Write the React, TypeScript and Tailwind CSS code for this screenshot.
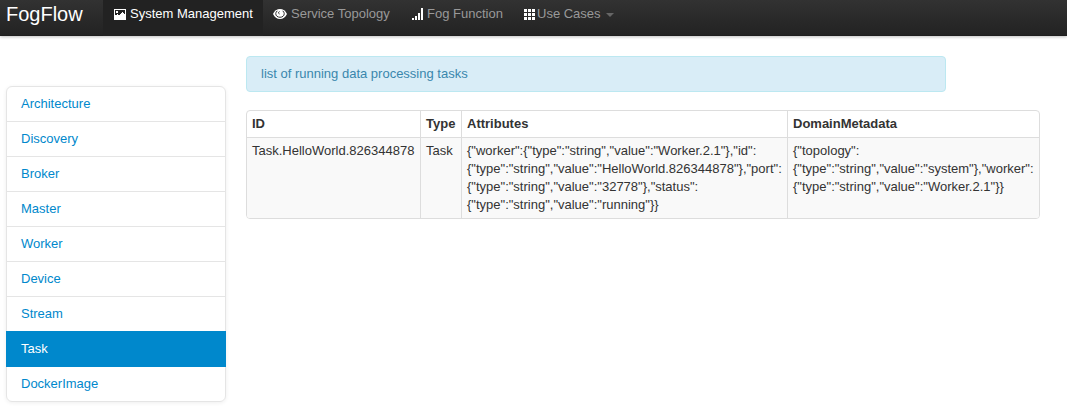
import React from "react";

const sections = [
  "Architecture",
  "Discovery",
  "Broker",
  "Master",
  "Worker",
  "Device",
  "Stream",
  "Task",
  "DockerImage",
];

function PictureIcon() {
  return (
    <svg width="12" height="11" viewBox="0 0 12 11" className="block shrink-0" fill="#fff" shapeRendering="crispEdges">
      <path fillRule="evenodd" d="M0 0H12V11H0ZM1 1V6H3V5H4V6H6V5H7V4H8V3H9V4H10V5H11V1ZM2 2H4V4H2Z" />
    </svg>
  );
}

function EyeIcon() {
  return (
    <svg width="14" height="10" viewBox="0 0 14 10" className="block shrink-0">
      <path fill="#fff" d="M0 5C1.6 1.8 4 0 7 0s5.400 1.800 7 5c-1.600 3.200-4 5-7 5S1.600 8.200 0 5Z" />
      <path fill="none" stroke="#2b2b2b" strokeWidth="1" d="M4.300 1.800C2.300 3.400 2.300 6 4 7.300c1.800 1.300 4.300 1.300 6 0 1.700-1.300 1.700-3.900-.3-5.500" />
      <path fill="none" stroke="#2b2b2b" strokeWidth="1" d="M6.500 2.500C5.300 3 5.200 4.500 6.500 5" />
    </svg>
  );
}

function SignalIcon() {
  return (
    <svg width="12" height="12" viewBox="0 0 12 12" className="block shrink-0" fill="#fff" shapeRendering="crispEdges">
      <path d="M0 10h2v2H0zM3 8h2v4H3zM6 5h2v7H6zM9 0h2v12H9z" />
    </svg>
  );
}

function GridIcon() {
  return (
    <svg width="11" height="11" viewBox="0 0 11 11" className="block shrink-0" fill="#fff" shapeRendering="crispEdges">
      <path d="M0 0h3v3H0zM4 0h3v3H4zM8 0h3v3H8zM0 4h3v3H0zM4 4h3v3H4zM8 4h3v3H8zM0 8h3v3H0zM4 8h3v3H4zM8 8h3v3H8z" />
    </svg>
  );
}

function Navbar() {
  return (
    <nav className="flex h-9 items-start bg-linear-to-b from-[#323232] to-[#222222] text-[#999999] shadow-[0_1px_3px_rgba(0,0,0,0.25),inset_0_-1px_0_rgba(0,0,0,0.1)]">
      <a href="#" className="w-[103px] pt-1 pl-1.5 text-[20px] leading-5 text-white">
        FogFlow
      </a>
      <a href="#" className="flex h-9 w-40 items-start gap-1 bg-[#222222] pt-[5px] pl-[11px] text-white">
        <span className="pt-1"><PictureIcon /></span>
        System Management
      </a>
      <a href="#" className="flex w-[138px] pt-[5px] pl-2.5">
        <span className="w-[18px] pt-1"><EyeIcon /></span>
        Service Topology
      </a>
      <a href="#" className="flex w-[112px] pt-[5px] pl-[11px]">
        <span className="w-[15px] pt-[3px]"><SignalIcon /></span>
        Fog Function
      </a>
      <a href="#" className="flex pt-[5px] pl-[11px]">
        <span className="w-[13px] pt-1"><GridIcon /></span>
        Use Cases
        <span className="mt-2 ml-[5px] h-0 border-x-4 border-t-4 border-x-transparent border-t-[#666666]" />
      </a>
    </nav>
  );
}

function Sidebar() {
  return (
    <ul className="mt-[50px] flex w-[220px] shrink-0 flex-col self-start rounded-md bg-white shadow-[0_1px_4px_rgba(0,0,0,0.065)]">
      {sections.map((name) => (
        <li
          key={name}
          className={
            name === "Task"
              ? "relative z-10 -mb-px border border-[#0088cc] bg-[#0088cc] px-3.5 py-2 text-white"
              : "-mb-px border border-[#e5e5e5] px-3.5 py-2 text-[#0088cc] first:rounded-t-md last:mb-0 last:rounded-b-md"
          }
        >
          <a href="#" className="block">{name}</a>
        </li>
      ))}
    </ul>
  );
}

function TaskTable() {
  return (
    <div className="w-[794px] overflow-hidden rounded border border-[#dddddd]">
      <table className="w-full table-fixed border-separate border-spacing-0 text-left">
        <colgroup>
          <col className="w-[173px]" />
          <col className="w-[41px]" />
          <col className="w-[326px]" />
          <col className="w-[252px]" />
        </colgroup>
        <thead>
          <tr className="[&>th]:border-l [&>th]:border-[#dddddd] [&>th]:py-1 [&>th]:pl-[5px] [&>th]:font-bold [&>th:first-child]:border-l-0">
            <th>ID</th>
            <th>Type</th>
            <th>Attributes</th>
            <th>DomainMetadata</th>
          </tr>
        </thead>
        <tbody>
          <tr className="bg-[#f9f9f9] align-top whitespace-nowrap [&>td]:border-t [&>td]:border-l [&>td]:border-[#dddddd] [&>td]:py-1 [&>td]:pl-[5px] [&>td:first-child]:border-l-0">
            <td>Task.HelloWorld.826344878</td>
            <td>Task</td>
            <td>
              {'{"worker":{"type":"string","value":"Worker.2.1"},"id":'}<br />
              {'{"type":"string","value":"HelloWorld.826344878"},"port":'}<br />
              {'{"type":"string","value":"32778"},"status":'}<br />
              {'{"type":"string","value":"running"}}'}
            </td>
            <td>
              {'{"topology":'}<br />
              {'{"type":"string","value":"system"},"worker":'}<br />
              {'{"type":"string","value":"Worker.2.1"}}'}
            </td>
          </tr>
        </tbody>
      </table>
    </div>
  );
}

export default function App() {
  return (
    <div className="h-[411px] overflow-hidden bg-white font-['Liberation_Sans',Arial,sans-serif] text-[13px] leading-[18px] text-[#333333]">
      <Navbar />
      <div className="flex gap-5 pl-1.5">
        <Sidebar />
        <main className="flex flex-col gap-[18px] pt-5">
          <div className="w-[700px] rounded border border-[#bce8f1] bg-[#d9edf7] px-3.5 py-2 text-[#3a87ad]">
            list of running data processing tasks
          </div>
          <TaskTable />
        </main>
      </div>
    </div>
  );
}
